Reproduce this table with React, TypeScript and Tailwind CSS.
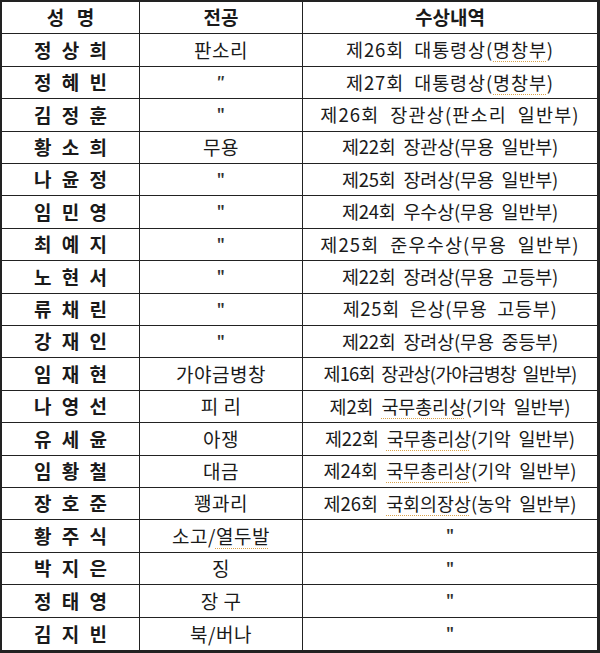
import type { ReactNode } from "react";

type Row = {
  name: string;
  major: ReactNode;
  award: ReactNode;
  // letter spacing of the award text, tuned per row to the original widths
  track?: string;
};

const Dotted = ({ children }: { children: ReactNode }) => (
  <span className="underline decoration-dotted decoration-[#d9a24a] decoration-1 underline-offset-[4px]">
    {children}
  </span>
);

const Ditto = ({ slanted = false }: { slanted?: boolean }) => (
  <span className="self-start pt-[7px] text-[14px] font-bold leading-none text-[#333]">
    {slanted ? "″" : '"'}
  </span>
);

const rows: Row[] = [
  { name: "정 상 희", major: "판소리", award: <>제26회  대통령상(<Dotted>명창부</Dotted>)</>, track: "tracking-[0.9px]" },
  { name: "정 혜 빈", major: <Ditto slanted />, award: <>제27회  대통령상(<Dotted>명창부</Dotted>)</>, track: "tracking-[0.9px]" },
  { name: "김 정 훈", major: <Ditto />, award: "제26회  장관상(판소리  일반부)", track: "tracking-[1.2px]" },
  { name: "황 소 희", major: "무용", award: "제22회  장관상(무용  일반부)", track: "tracking-[-0.2px]" },
  { name: "나 윤 정", major: <Ditto />, award: "제25회  장려상(무용  일반부)", track: "tracking-[-0.2px]" },
  { name: "임 민 영", major: <Ditto />, award: "제24회  우수상(무용  일반부)", track: "tracking-[-0.2px]" },
  { name: "최 예 지", major: <Ditto />, award: "제25회  준우수상(무용  일반부)", track: "tracking-[1.2px]" },
  { name: "노 현 서", major: <Ditto />, award: "제22회  장려상(무용  고등부)", track: "tracking-[-0.2px]" },
  { name: "류 채 린", major: <Ditto />, award: "제25회  은상(무용  고등부)", track: "tracking-[0.7px]" },
  { name: "강 재 인", major: <Ditto />, award: "제22회  장려상(무용  중등부)", track: "tracking-[-0.2px]" },
  { name: "임 재 현", major: "가야금병창", award: "제16회  장관상(가야금병창  일반부)", track: "tracking-[-0.85px]" },
  { name: "나 영 선", major: "피 리", award: <>제2회  <Dotted>국무총리상</Dotted>(기악  일반부)</>, track: "tracking-[-0.15px]" },
  { name: "유 세 윤", major: "아쟁", award: <>제22회  <Dotted>국무총리상</Dotted>(기악  일반부)</>, track: "tracking-[-0.2px]" },
  { name: "임 황 철", major: "대금", award: <>제24회  <Dotted>국무총리상</Dotted>(기악  일반부)</>, track: "tracking-[-0.05px]" },
  { name: "장 호 준", major: "꽹과리", award: <>제26회  <Dotted>국회의장상</Dotted>(농악  일반부)</>, track: "tracking-[-0.05px]" },
  { name: "황 주 식", major: <>소고/<Dotted>열두발</Dotted></>, award: <Ditto /> },
  { name: "박 지 은", major: "징", award: <Ditto /> },
  { name: "정 태 영", major: "장 구", award: <Ditto /> },
  { name: "김 지 빈", major: "북/버나", award: <Ditto /> },
];

export default function App() {
  const cell =
    "flex items-center justify-center whitespace-pre border-[#222] overflow-hidden";

  return (
    <div
      className="w-[600px] h-[653px] bg-white text-[#1a1a1a] border-t-2 border-l-2 border-r-[3px] border-b-[3px] border-[#222] grid grid-cols-[138px_163px_1fr] grid-rows-[repeat(20,minmax(0,1fr))]"
      style={{ fontFamily: '"Noto Sans CJK KR", "Noto Sans", sans-serif' }}
    >
      <div className={`${cell} border-r border-b text-[19px] font-bold tracking-[4px] pl-[4px]`}>성 명</div>
      <div className={`${cell} border-r border-b text-[19px] font-bold`}>전공</div>
      <div className={`${cell} border-b text-[19px] font-bold`}>수상내역</div>

      {rows.map((row, i) => {
        const last = i === rows.length - 1;
        const bottom = last ? "" : "border-b";
        return (
          <div key={row.name} className="contents">
            <div className={`${cell} border-r ${bottom} text-[19px] font-bold tracking-[3px] pl-[3px]`}>
              {row.name}
            </div>
            <div className={`${cell} border-r ${bottom} text-[19px] tracking-[0.5px]`}>{row.major}</div>
            <div className={`${cell} ${bottom} text-[18.5px] ${row.track ?? ""}`}>{row.award}</div>
          </div>
        );
      })}
    </div>
  );
}
